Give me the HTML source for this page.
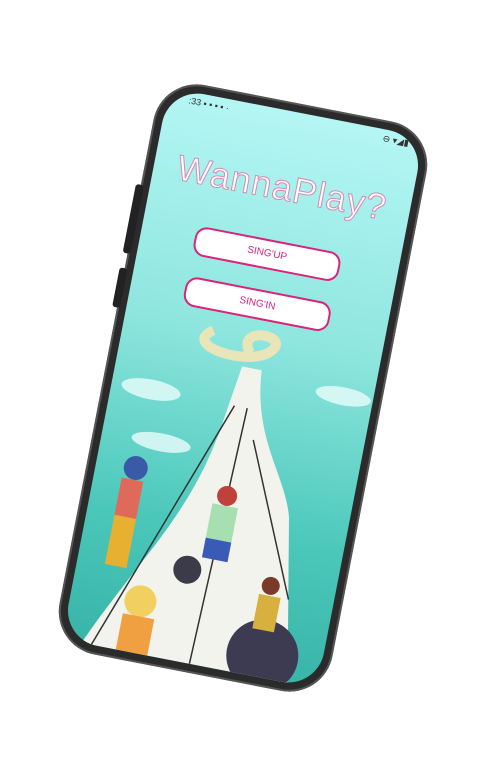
<!DOCTYPE html>
<html><head><style>
html,body{margin:0;padding:0;background:#fff;width:484px;height:775px;overflow:hidden;position:relative}
.phone{position:absolute;left:104px;top:98px;width:278px;height:580px;transform:rotate(11deg);background:#2b2b2b;border-radius:44px;box-shadow:0 0 0 2px #555 inset}
.screen{position:absolute;left:9px;top:9px;right:9px;bottom:9px;border-radius:36px;overflow:hidden;background:linear-gradient(#b4f6f4 0%,#8fe6df 40%,#4cc8bb 75%,#38b4a8 100%)}
.title{position:absolute;left:0;right:0;top:56px;text-align:center;font:36px "Liberation Sans",sans-serif;color:#fff;-webkit-text-stroke:1px #d58ab5;letter-spacing:1px}
.btn{position:absolute;left:54px;width:144px;height:26px;border:2px solid #d8247b;border-radius:12px;background:#fff;color:#d8247b;font:10px "Liberation Sans",sans-serif;text-align:center;line-height:26px}
.status{position:absolute;top:4px;left:22px;font:9px "Liberation Sans",sans-serif;color:#333}
.side{position:absolute;background:#222;width:8px;border-radius:3px}
</style></head><body>
<div class="phone">
 <div class="side" style="left:-5px;top:110px;height:70px"></div>
 <div class="side" style="left:-5px;top:195px;height:40px"></div>
 <div class="screen">
  <div class="status">:33 ▪ ▪ ▪ ▪ ·</div>
  <div style="position:absolute;right:14px;top:4px;font:9px sans-serif;color:#333">⊖ ▾◢▮</div>
  <svg width="260" height="562" style="position:absolute;left:0;top:0">
   <ellipse cx="40" cy="300" rx="30" ry="10" fill="#eafcfb" opacity=".8"/>
   <ellipse cx="230" cy="270" rx="28" ry="9" fill="#eafcfb" opacity=".8"/>
   <ellipse cx="60" cy="350" rx="30" ry="9" fill="#eafcfb" opacity=".8"/>
   <path d="M90 230 C60 250 130 260 150 240 C170 220 110 220 130 245" stroke="#e8e6b8" stroke-width="10" fill="none"/>
   <path d="M125 260 L145 260 C150 330 190 360 200 400 L230 562 L20 562 C60 470 100 420 115 330 Z" fill="#f3f3ee"/>
   <path d="M125 300 L30 562 M138 300 L130 562 M150 330 L215 480" stroke="#333" stroke-width="1.5" fill="none"/>
   <circle cx="110" cy="470" r="14" fill="#3b3b4a"/>
   <circle cx="200" cy="540" r="36" fill="#3d3b52"/>
   <circle cx="40" cy="380" r="12" fill="#3a5aa8"/>
   <rect x="28" y="392" width="22" height="40" fill="#e06a5a"/>
   <rect x="28" y="430" width="22" height="50" fill="#e8b030"/>
   <circle cx="135" cy="390" r="10" fill="#c0403a"/>
   <rect x="122" y="400" width="26" height="35" fill="#a6e0b0"/>
   <rect x="122" y="435" width="26" height="20" fill="#3a5ab8"/>
   <circle cx="195" cy="470" r="9" fill="#7a3a2a"/>
   <rect x="185" y="480" width="22" height="35" fill="#d8b040"/>
   <circle cx="70" cy="510" r="16" fill="#f2d060"/>
   <rect x="55" y="525" width="32" height="37" fill="#f0a040"/>
  </svg>
  <div class="title">WannaPlay?</div>
  <div class="btn" style="top:130px">SING'UP</div>
  <div class="btn" style="top:181px">SING'IN</div>
 </div>
</div>
</body></html>
